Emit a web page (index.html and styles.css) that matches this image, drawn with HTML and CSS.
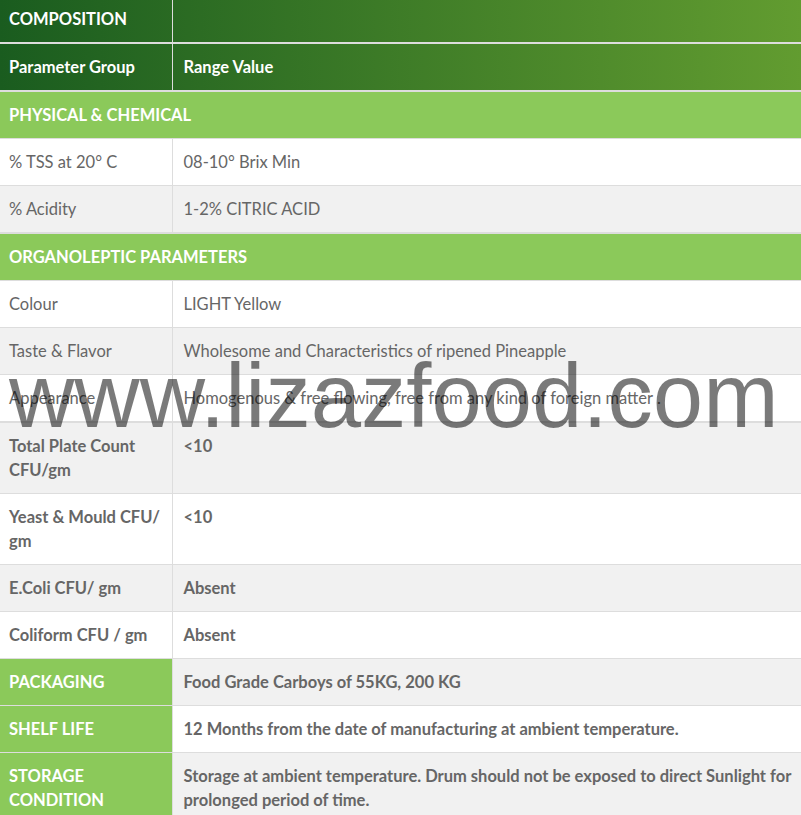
FILE: index.html
```html
<!DOCTYPE html>
<html lang="en">

<head>
    <meta charset="UTF-8">
    <meta name="viewport" content="width=device-width, initial-scale=1.0">
    <title>Pineapple Concentrate - Composition</title>
    <link rel="stylesheet" href="styles.css">
</head>

<body>
    <div class="spec-wrap">
        <table class="spec-table">
            <colgroup>
                <col class="col-param">
                <col>
            </colgroup>
            <thead>
                <tr>
                    <th>COMPOSITION</th>
                    <th></th>
                </tr>
                <tr>
                    <th>Parameter Group</th>
                    <th>Range Value</th>
                </tr>
            </thead>

            <!-- physical -->
            <tbody>
                <tr class="section">
                    <td colspan="2">PHYSICAL &amp; CHEMICAL</td>
                </tr>
                <tr>
                    <td>% TSS at 20° C</td>
                    <td>08-10° Brix Min</td>
                </tr>
                <tr>
                    <td>% Acidity</td>
                    <td>1-2% CITRIC ACID</td>
                </tr>
            </tbody>

            <!-- organoleptic -->
            <tbody>
                <tr class="section">
                    <td colspan="2">ORGANOLEPTIC PARAMETERS</td>
                </tr>
                <tr>
                    <td>Colour</td>
                    <td>LIGHT Yellow</td>
                </tr>
                <tr>
                    <td>Taste &amp; Flavor</td>
                    <td>Wholesome and Characteristics of ripened Pineapple</td>
                </tr>
                <tr>
                    <td>Appearance</td>
                    <td>Homogenous &amp; free flowing, free from any kind of foreign matter .</td>
                </tr>
            </tbody>

            <!-- microbiology + packing -->
            <tbody class="bold-rows">
                <tr>
                    <td>Total Plate Count CFU/gm</td>
                    <td>&lt;10</td>
                </tr>
                <tr>
                    <td>Yeast &amp; Mould CFU/ gm</td>
                    <td>&lt;10</td>
                </tr>
                <tr>
                    <td>E.Coli CFU/ gm</td>
                    <td>Absent</td>
                </tr>
                <tr>
                    <td>Coliform CFU / gm</td>
                    <td>Absent</td>
                </tr>
                <tr>
                    <td class="label">PACKAGING</td>
                    <td>Food Grade Carboys of 55KG, 200 KG</td>
                </tr>
                <tr>
                    <td class="label">SHELF LIFE</td>
                    <td>12 Months from the date of manufacturing at ambient temperature.</td>
                </tr>
                <tr>
                    <td class="label">STORAGE CONDITION</td>
                    <td>Storage at ambient temperature. Drum should not be exposed to direct Sunlight for prolonged period of time.</td>
                </tr>
            </tbody>
        </table>

        <div class="watermark">www.lizazfood.com</div>
    </div>
</body>

</html>
```

FILE: styles.css
```css
body {
    margin: 0;
    padding: 0;
    font-family: 'Lato', sans-serif;
    background-color: #ffffff;
    color: #666666;
    overflow: hidden;
}

.spec-wrap {
    position: relative;
    margin-top: -4px;
}

.spec-table {
    width: 801px;
    border-collapse: collapse;
    table-layout: fixed;
    font-size: 16.5px;
    line-height: 24px;
}

.col-param {
    width: 172px;
}

.spec-table th,
.spec-table td {
    padding: 11px 4px 11px 11px;
    text-align: left;
    vertical-align: top;
    border-bottom: 1px solid #dddddd;
    border-left: 1px solid #dddddd;
}

.spec-table th:first-child,
.spec-table td:first-child {
    padding-left: 9px;
    border-left: none;
}

/* header */
.spec-table thead {
    background: linear-gradient(to right, #1a5c1f, #629c30);
}

.spec-table th {
    color: #ffffff;
    font-weight: bold;
    border-bottom: 2px solid #dddddd;
    border-left: 1px solid #dddddd;
}

.spec-table tbody {
    border-top: 2px solid #dddddd;
}

.spec-table tbody:first-of-type {
    border-top: none;
}

.spec-table tbody tr:nth-child(odd) {
    background-color: #f1f1f1;
}

.spec-table tbody tr:nth-child(even) {
    background-color: #ffffff;
}

.spec-table tr.section td {
    background-color: #8bc95a;
    color: #ffffff;
    font-weight: bold;
}

.bold-rows td {
    font-weight: bold;
}

.spec-table td.label {
    background-color: #8bc95a;
    color: #ffffff;
}

.watermark {
    position: absolute;
    top: 355px;
    left: 9px;
    font-family: 'Liberation Sans', Arial, sans-serif;
    font-size: 90.5px;
    line-height: 1;
    white-space: nowrap;
    color: rgba(0, 0, 0, 0.52);
    pointer-events: none;
}
```
